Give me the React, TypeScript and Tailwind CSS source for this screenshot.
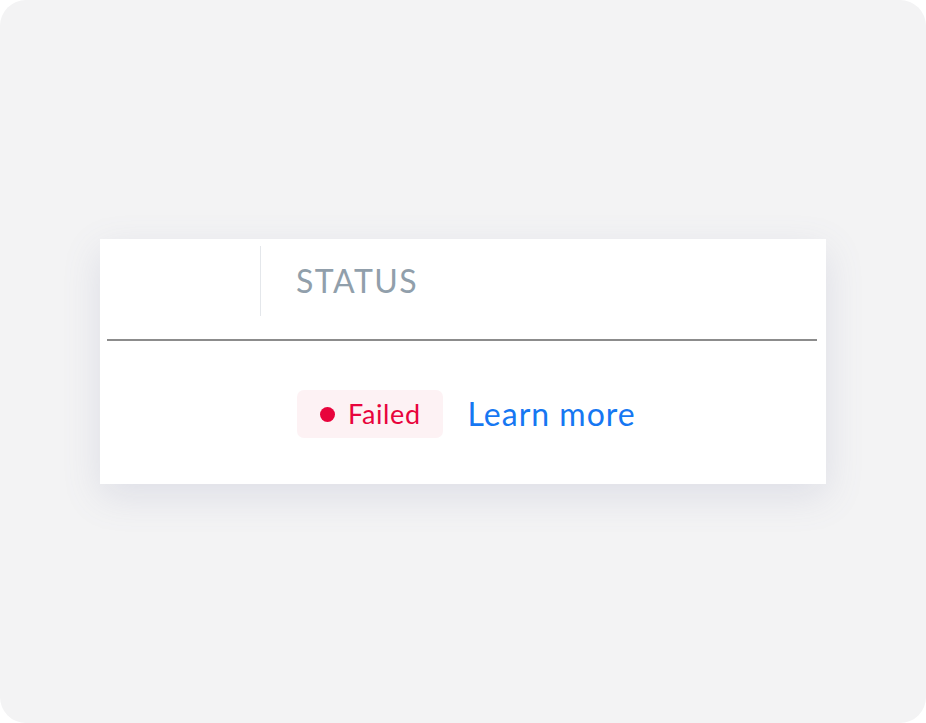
import React from 'react';

const StatusBadge = ({ label }: { label: string }) => (
  <span className="inline-flex items-center gap-[13px] h-[48px] pl-[23px] pr-[22px] rounded-[7px] bg-[#fdf2f4] text-[#e8043c] text-[27px] tracking-[0.6px]">
    <span className="w-[15px] h-[15px] rounded-full bg-[#e8043c]" />
    {label}
  </span>
);

const App = () => {
  return (
    <div className="w-[926px] h-[723px] bg-white font-['Lato',sans-serif]">
      <div className="w-full h-full rounded-[26px] bg-[#f3f3f4] flex items-center justify-center">
        <div className="w-[726px] h-[245px] bg-white px-[7px] pt-[7px] shadow-[0_12px_36px_rgba(110,120,160,0.16)]">
          {/* table header */}
          <div className="flex h-[70px] items-center">
            <div className="w-[154px] h-full border-r border-[#e4e7eb]" />
            <div className="pl-[35px] text-[32px] text-[#919fab] tracking-[1.5px]">STATUS</div>
          </div>
          <div className="mt-[23px] mr-[2px] border-t-2 border-[#8c8c8c]" />

          {/* row */}
          <div className="mt-[49px] pl-[190px] flex items-center gap-[25px]">
            <StatusBadge label="Failed" />
            <a href="#" className="text-[32px] tracking-[1px] text-[#1677f2]">Learn more</a>
          </div>
        </div>
      </div>
    </div>
  );
};

export default App;
